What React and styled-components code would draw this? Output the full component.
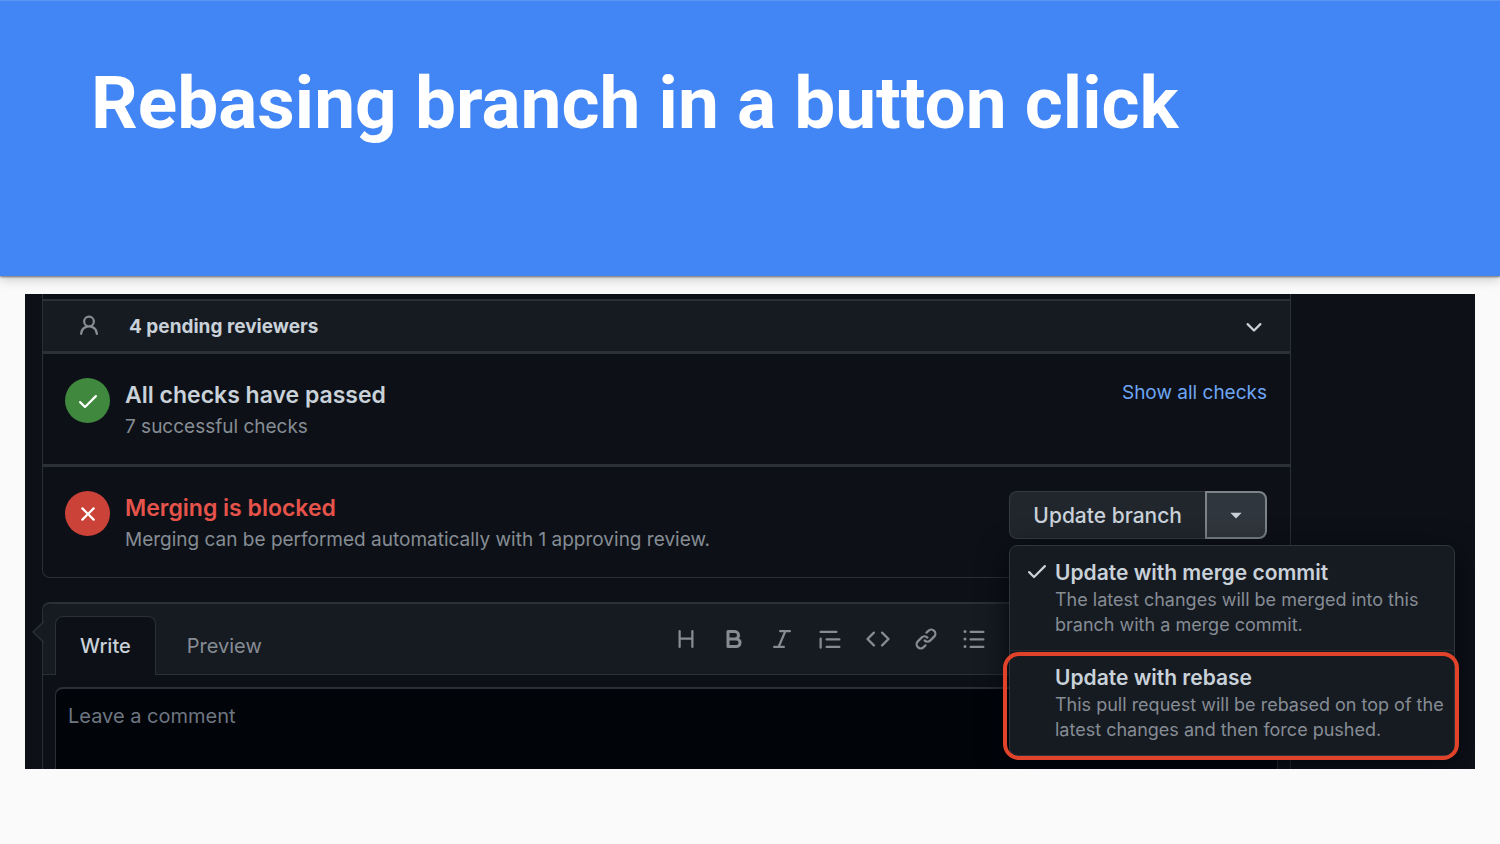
import styled, { createGlobalStyle } from 'styled-components';

const GlobalStyle = createGlobalStyle`
  :root {
    --canvas: #0d1117;
    --subtle: #161b22;
    --inset: #010409;
    --line: #2b2f36;
    --text: #c9d1d9;
    --muted: #868c94;
    --link: #6ea6f5;
  }

  *, *::before, *::after {
    box-sizing: border-box;
  }

  body {
    margin: 0;
    background-color: #fafafa;
    font-family: Inter, 'Liberation Sans', sans-serif;
  }

  button, textarea {
    font-family: inherit;
  }
`;

const TitleBanner = styled.header`
  position: relative;
  height: 276px;
  padding: 60px 91px;
  background-color: #4285f4;
  border-top: 1px solid #5b95f5;
  box-shadow: 0 1px 2px rgba(0, 0, 0, 0.5), 0 4px 10px rgba(0, 0, 0, 0.18);
`;

const SlideTitle = styled.h1`
  margin: 0;
  color: #fff;
  font-family: Roboto, sans-serif;
  font-size: 73px;
  font-weight: 700;
  line-height: 84px;
`;

const Panel = styled.main`
  margin: 18px 25px 0;
  padding: 0 184px 0 17px;
  background-color: var(--canvas);
  overflow: hidden;
`;

const MergeBox = styled.section`
  padding-top: 5px;
  border: 1px solid var(--line);
  border-top: none;
  border-radius: 0 0 8px 8px;
`;

const ReviewersRow = styled.div`
  display: flex;
  align-items: center;
  height: 55px;
  padding: 0 24px 0 34px;
  border-top: 2px solid var(--line);
  border-bottom: 3px solid var(--line);
  background-color: var(--subtle);
  color: var(--muted);
`;

const ReviewersTitle = styled.strong`
  flex: 1;
  margin-left: 28px;
  color: var(--text);
  font-size: 19px;
  font-weight: 700;
`;

const IconButton = styled.button`
  display: flex;
  padding: 0;
  border: none;
  background: none;
  color: ${props => props.$bright ? 'var(--text)' : 'var(--muted)'};
  cursor: pointer;
`;

const StatusRow = styled.div`
  display: flex;
  align-items: flex-start;
  gap: 15px;
  padding: 24px 23px 22px 22px;

  & + & {
    border-top: 3px solid var(--line);
  }
`;

const StatusBadge = styled.span`
  display: flex;
  align-items: center;
  justify-content: center;
  width: 45px;
  height: 45px;
  border-radius: 50%;
  background-color: ${props => props.$failed ? '#ca4238' : '#3f883d'};
  color: #fff;
`;

const StatusText = styled.div`
  flex: 1;
`;

const StatusHeading = styled.h2`
  margin: 0;
  color: ${props => props.$failed ? '#e5534b' : 'var(--text)'};
  font-size: 23px;
  font-weight: 600;
  line-height: 34px;
`;

const StatusDetail = styled.p`
  margin: 0;
  color: var(--muted);
  font-size: 19px;
  line-height: 30px;
`;

const ChecksLink = styled.a`
  color: var(--link);
  font-size: 19px;
  line-height: 30px;
  text-decoration: none;

  &:hover {
    text-decoration: underline;
  }
`;

const ButtonGroup = styled.div`
  position: relative;
  display: flex;
`;

const UpdateButton = styled.button`
  height: 48px;
  padding: 0 23px;
  border: 1px solid #363b42;
  border-right: none;
  border-radius: 8px 0 0 8px;
  background-color: #21262d;
  color: var(--text);
  font-size: 21px;
  font-weight: 500;
  cursor: pointer;
`;

const MenuToggle = styled.button`
  display: flex;
  align-items: center;
  justify-content: center;
  width: 62px;
  height: 48px;
  border: 2px solid #7d838b;
  border-radius: 0 8px 8px 0;
  background-color: #30363d;
  color: var(--text);
  cursor: pointer;
`;

const Menu = styled.div`
  position: absolute;
  top: 54px;
  right: -188px;
  z-index: 2;
  width: 446px;
  border: 1px solid #30353c;
  border-radius: 8px;
  background-color: var(--subtle);
  box-shadow: 0 8px 30px rgba(1, 4, 9, 0.85);
`;

const MenuItem = styled.button`
  position: relative;
  display: grid;
  grid-template-columns: 30px 1fr;
  width: 100%;
  padding: 13px 8px 13px 15px;
  border: none;
  background: none;
  color: var(--text);
  text-align: left;
  cursor: pointer;

  & + & {
    border-top: 1px solid #23282f;
  }

  ${props => props.$highlighted && `
    &::after {
      content: '';
      position: absolute;
      inset: 1px -5px -5px -7px;
      border: 4px solid #e0432a;
      border-radius: 16px;
      pointer-events: none;
    }
  `}
`;

const MenuItemTitle = styled.span`
  display: block;
  font-size: 21px;
  font-weight: 600;
  line-height: 28px;
`;

const MenuItemDetail = styled.span`
  display: block;
  color: var(--muted);
  font-size: 18px;
  line-height: 25px;
`;

const Composer = styled.section`
  position: relative;
  margin-top: 24px;
  border: 1px solid var(--line);
  border-top-width: 2px;
  border-bottom: none;
  border-radius: 8px 8px 0 0;
`;

const ComposerArrow = styled.svg`
  position: absolute;
  top: 17px;
  left: -11px;
`;

const ComposerHeader = styled.div`
  display: flex;
  align-items: flex-start;
  padding: 12px 304px 0 12px;
  border-bottom: 1px solid var(--line);
  border-radius: 8px 8px 0 0;
  background-color: var(--subtle);
`;

const Tabs = styled.div`
  display: flex;
  flex: 1;
  gap: 6px;
  margin-bottom: -1px;
`;

const Tab = styled.button`
  height: 59px;
  padding: 0 24px;
  border: 1px solid ${props => props.$active ? 'var(--line)' : 'transparent'};
  border-bottom: none;
  border-radius: 8px 8px 0 0;
  background-color: ${props => props.$active ? 'var(--canvas)' : 'transparent'};
  color: ${props => props.$active ? 'var(--text)' : 'var(--muted)'};
  font-size: 20px;
  font-weight: ${props => props.$active ? 500 : 400};
  cursor: pointer;
`;

const Toolbar = styled.div`
  display: flex;
  gap: 24px;
  padding-top: 11px;
`;

const CommentField = styled.textarea`
  display: block;
  width: calc(100% - 24px);
  height: 82px;
  margin: 12px 12px 0;
  padding: 13px 12px;
  border: 1px solid var(--line);
  border-top-width: 2px;
  border-bottom: none;
  border-radius: 8px 8px 0 0;
  outline: none;
  background-color: var(--inset);
  color: var(--text);
  font-size: 20px;
  line-height: 28px;
  resize: none;

  &::placeholder {
    color: #6e7681;
    opacity: 1;
  }
`;

const icons = {
  person: 'M10.5 5a2.5 2.5 0 11-5 0 2.5 2.5 0 015 0zm.061 3.073a4 4 0 10-5.123 0 6.004 6.004 0 00-3.431 5.142.75.75 0 001.498.07 4.5 4.5 0 018.99 0 .75.75 0 101.498-.07 6.005 6.005 0 00-3.432-5.142z',
  chevron: 'M12.78 6.22a.75.75 0 010 1.06l-4.25 4.25a.75.75 0 01-1.06 0L3.22 7.28a.75.75 0 011.06-1.06L8 9.94l3.72-3.72a.75.75 0 011.06 0z',
  check: 'M13.78 4.22a.75.75 0 010 1.06l-7.25 7.25a.75.75 0 01-1.06 0L2.22 9.28a.75.75 0 011.06-1.06L6 10.94l6.72-6.72a.75.75 0 011.06 0z',
  x: 'M3.72 3.72a.75.75 0 011.06 0L8 6.94l3.22-3.22a.75.75 0 111.06 1.06L9.06 8l3.22 3.22a.75.75 0 11-1.06 1.06L8 9.06l-3.22 3.22a.75.75 0 01-1.06-1.06L6.94 8 3.72 4.78a.75.75 0 010-1.06z',
  heading: 'M3.75 2a.75.75 0 01.75.75V7h7V2.75a.75.75 0 011.5 0v10.5a.75.75 0 01-1.5 0V8.5h-7v4.75a.75.75 0 01-1.5 0V2.75A.75.75 0 013.75 2z',
  bold: 'M4 2a1 1 0 00-1 1v10a1 1 0 001 1h5.5a3.5 3.5 0 001.852-6.47A3.5 3.5 0 008.5 2H4zm4.5 5a1.5 1.5 0 100-3H5v3h3.5zM5 9v3h4.5a1.5 1.5 0 000-3H5z',
  italic: 'M6 2.75A.75.75 0 016.75 2h6.5a.75.75 0 010 1.5h-2.505l-3.858 9H9.25a.75.75 0 010 1.5h-6.5a.75.75 0 010-1.5h2.505l3.858-9H6.75A.75.75 0 016 2.75z',
  quote: 'M1.75 2.5a.75.75 0 000 1.5h10.5a.75.75 0 000-1.5H1.75zm4 5a.75.75 0 000 1.5h8.5a.75.75 0 000-1.5h-8.5zm0 5a.75.75 0 000 1.5h8.5a.75.75 0 000-1.5h-8.5zM2.5 7.75a.75.75 0 00-1.5 0v6a.75.75 0 001.5 0v-6z',
  code: 'M4.72 3.22a.75.75 0 011.06 1.06L2.06 8l3.72 3.72a.75.75 0 11-1.06 1.06L.47 8.53a.75.75 0 010-1.06l4.25-4.25zm6.56 0a.75.75 0 10-1.06 1.06L13.94 8l-3.72 3.72a.75.75 0 101.06 1.06l4.25-4.25a.75.75 0 000-1.06l-4.25-4.25z',
  link: 'M7.775 3.275a.75.75 0 001.06 1.06l1.25-1.25a2 2 0 112.83 2.83l-2.5 2.5a2 2 0 01-2.83 0 .75.75 0 00-1.06 1.06 3.5 3.5 0 004.95 0l2.5-2.5a3.5 3.5 0 00-4.95-4.95l-1.25 1.25zm-4.69 9.64a2 2 0 010-2.83l2.5-2.5a2 2 0 012.83 0 .75.75 0 001.06-1.06 3.5 3.5 0 00-4.95 0l-2.5 2.5a3.5 3.5 0 004.95 4.95l1.25-1.25a.75.75 0 00-1.06-1.06l-1.25 1.25a2 2 0 01-2.83 0z',
  list: 'M2 4a1 1 0 100-2 1 1 0 000 2zm3.75-1.5a.75.75 0 000 1.5h8.5a.75.75 0 000-1.5h-8.5zm0 5a.75.75 0 000 1.5h8.5a.75.75 0 000-1.5h-8.5zm0 5a.75.75 0 000 1.5h8.5a.75.75 0 000-1.5h-8.5zM3 8a1 1 0 11-2 0 1 1 0 012 0zm-1 6a1 1 0 100-2 1 1 0 000 2z',
  caret: 'M4.2 6.5h7.6L8 10.3z',
};

function Icon({ name }) {
  return (
    <svg width="24" height="24" viewBox="0 0 16 16" fill="currentColor" fillRule="evenodd" aria-hidden="true">
      <path d={icons[name]} />
    </svg>
  );
}

const tools = [
  { icon: 'heading', label: 'Heading' },
  { icon: 'bold', label: 'Bold' },
  { icon: 'italic', label: 'Italic' },
  { icon: 'quote', label: 'Quote' },
  { icon: 'code', label: 'Code' },
  { icon: 'link', label: 'Link' },
  { icon: 'list', label: 'Bulleted list' },
];

const updateMethods = [
  {
    id: 'merge',
    title: 'Update with merge commit',
    detail: 'The latest changes will be merged into this branch with a merge commit.',
    selected: true,
  },
  {
    id: 'rebase',
    title: 'Update with rebase',
    detail: 'This pull request will be rebased on top of the latest changes and then force pushed.',
    highlighted: true,
  },
];

function UpdateBranch() {
  return (
    <ButtonGroup>
      <UpdateButton type="button">Update branch</UpdateButton>
      <MenuToggle type="button" aria-label="Select update method" aria-expanded="true">
        <Icon name="caret" />
      </MenuToggle>
      <Menu role="menu">
        {updateMethods.map(method => (
          <MenuItem
            key={method.id}
            type="button"
            role="menuitemradio"
            aria-checked={Boolean(method.selected)}
            $highlighted={method.highlighted}
          >
            <span>{method.selected && <Icon name="check" />}</span>
            <span>
              <MenuItemTitle>{method.title}</MenuItemTitle>
              <MenuItemDetail>{method.detail}</MenuItemDetail>
            </span>
          </MenuItem>
        ))}
      </Menu>
    </ButtonGroup>
  );
}

export default function App() {
  return (
    <>
      <GlobalStyle />
      <TitleBanner>
        <SlideTitle>Rebasing branch in a button click</SlideTitle>
      </TitleBanner>

      <Panel>
        <MergeBox>
          <ReviewersRow>
            <Icon name="person" />
            <ReviewersTitle>4 pending reviewers</ReviewersTitle>
            <IconButton type="button" $bright aria-label="Show reviewers">
              <Icon name="chevron" />
            </IconButton>
          </ReviewersRow>

          <StatusRow>
            <StatusBadge><Icon name="check" /></StatusBadge>
            <StatusText>
              <StatusHeading>All checks have passed</StatusHeading>
              <StatusDetail>7 successful checks</StatusDetail>
            </StatusText>
            <ChecksLink href="#checks">Show all checks</ChecksLink>
          </StatusRow>

          <StatusRow>
            <StatusBadge $failed><Icon name="x" /></StatusBadge>
            <StatusText>
              <StatusHeading $failed>Merging is blocked</StatusHeading>
              <StatusDetail>Merging can be performed automatically with 1 approving review.</StatusDetail>
            </StatusText>
            <UpdateBranch />
          </StatusRow>
        </MergeBox>

        <Composer>
          <ComposerHeader>
            <Tabs role="tablist">
              <Tab type="button" role="tab" aria-selected="true" $active>Write</Tab>
              <Tab type="button" role="tab" aria-selected="false">Preview</Tab>
            </Tabs>
            <Toolbar>
              {tools.map(tool => (
                <IconButton key={tool.icon} type="button" aria-label={tool.label}>
                  <Icon name={tool.icon} />
                </IconButton>
              ))}
            </Toolbar>
          </ComposerHeader>
          <ComposerArrow width="12" height="22" viewBox="0 0 12 22" aria-hidden="true">
            <path d="M12 0.5L1 11L12 21.5" fill="#161b22" stroke="#2b2f36" strokeWidth="1.5" />
          </ComposerArrow>
          <CommentField aria-label="Comment" placeholder="Leave a comment" />
        </Composer>
      </Panel>
    </>
  );
}
